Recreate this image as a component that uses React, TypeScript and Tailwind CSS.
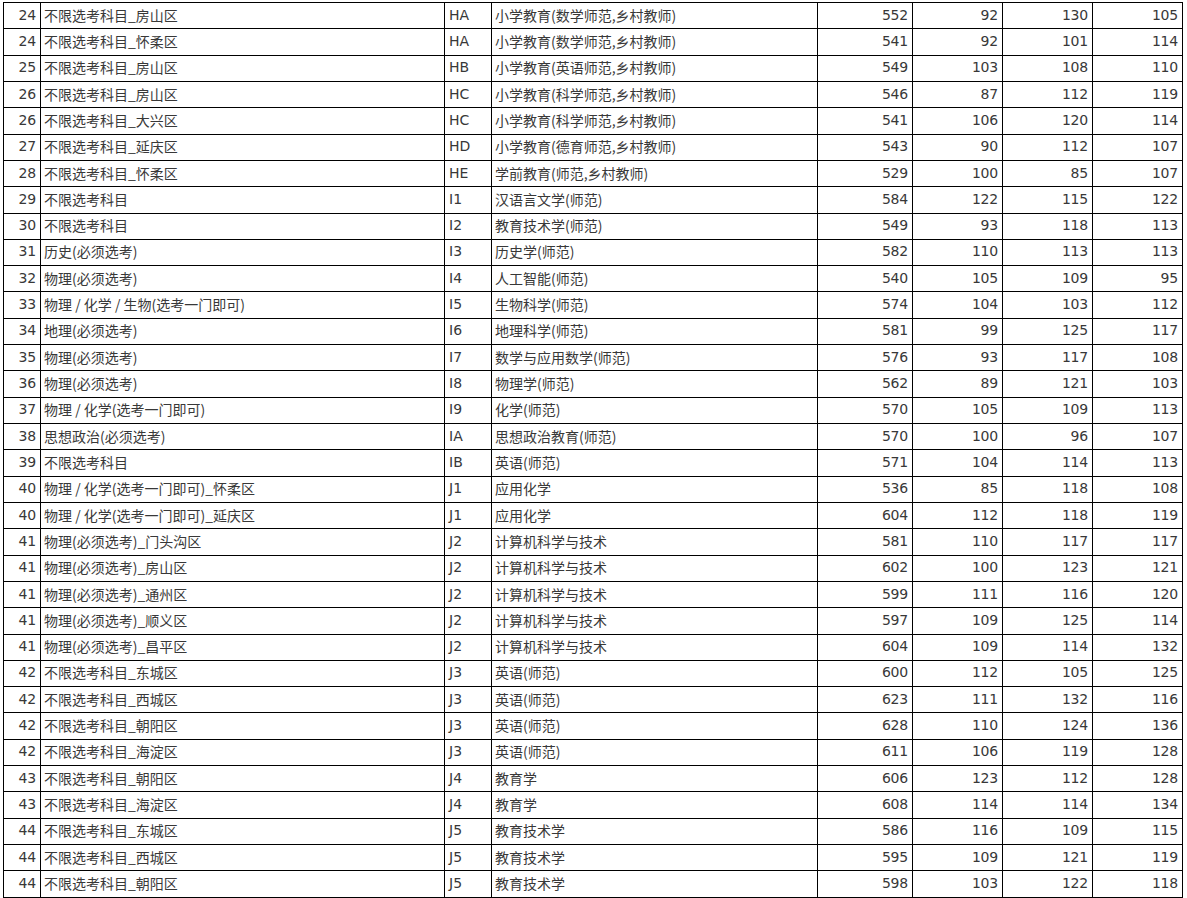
import React from "react";

type Row = [string, string, string, string, string, string, string, string];

const rows: Row[] = [
  ["24", "不限选考科目_房山区", "HA", "小学教育(数学师范,乡村教师)", "552", "92", "130", "105"],
  ["24", "不限选考科目_怀柔区", "HA", "小学教育(数学师范,乡村教师)", "541", "92", "101", "114"],
  ["25", "不限选考科目_房山区", "HB", "小学教育(英语师范,乡村教师)", "549", "103", "108", "110"],
  ["26", "不限选考科目_房山区", "HC", "小学教育(科学师范,乡村教师)", "546", "87", "112", "119"],
  ["26", "不限选考科目_大兴区", "HC", "小学教育(科学师范,乡村教师)", "541", "106", "120", "114"],
  ["27", "不限选考科目_延庆区", "HD", "小学教育(德育师范,乡村教师)", "543", "90", "112", "107"],
  ["28", "不限选考科目_怀柔区", "HE", "学前教育(师范,乡村教师)", "529", "100", "85", "107"],
  ["29", "不限选考科目", "I1", "汉语言文学(师范)", "584", "122", "115", "122"],
  ["30", "不限选考科目", "I2", "教育技术学(师范)", "549", "93", "118", "113"],
  ["31", "历史(必须选考)", "I3", "历史学(师范)", "582", "110", "113", "113"],
  ["32", "物理(必须选考)", "I4", "人工智能(师范)", "540", "105", "109", "95"],
  ["33", "物理 / 化学 / 生物(选考一门即可)", "I5", "生物科学(师范)", "574", "104", "103", "112"],
  ["34", "地理(必须选考)", "I6", "地理科学(师范)", "581", "99", "125", "117"],
  ["35", "物理(必须选考)", "I7", "数学与应用数学(师范)", "576", "93", "117", "108"],
  ["36", "物理(必须选考)", "I8", "物理学(师范)", "562", "89", "121", "103"],
  ["37", "物理 / 化学(选考一门即可)", "I9", "化学(师范)", "570", "105", "109", "113"],
  ["38", "思想政治(必须选考)", "IA", "思想政治教育(师范)", "570", "100", "96", "107"],
  ["39", "不限选考科目", "IB", "英语(师范)", "571", "104", "114", "113"],
  ["40", "物理 / 化学(选考一门即可)_怀柔区", "J1", "应用化学", "536", "85", "118", "108"],
  ["40", "物理 / 化学(选考一门即可)_延庆区", "J1", "应用化学", "604", "112", "118", "119"],
  ["41", "物理(必须选考)_门头沟区", "J2", "计算机科学与技术", "581", "110", "117", "117"],
  ["41", "物理(必须选考)_房山区", "J2", "计算机科学与技术", "602", "100", "123", "121"],
  ["41", "物理(必须选考)_通州区", "J2", "计算机科学与技术", "599", "111", "116", "120"],
  ["41", "物理(必须选考)_顺义区", "J2", "计算机科学与技术", "597", "109", "125", "114"],
  ["41", "物理(必须选考)_昌平区", "J2", "计算机科学与技术", "604", "109", "114", "132"],
  ["42", "不限选考科目_东城区", "J3", "英语(师范)", "600", "112", "105", "125"],
  ["42", "不限选考科目_西城区", "J3", "英语(师范)", "623", "111", "132", "116"],
  ["42", "不限选考科目_朝阳区", "J3", "英语(师范)", "628", "110", "124", "136"],
  ["42", "不限选考科目_海淀区", "J3", "英语(师范)", "611", "106", "119", "128"],
  ["43", "不限选考科目_朝阳区", "J4", "教育学", "606", "123", "112", "128"],
  ["43", "不限选考科目_海淀区", "J4", "教育学", "608", "114", "114", "134"],
  ["44", "不限选考科目_东城区", "J5", "教育技术学", "586", "116", "109", "115"],
  ["44", "不限选考科目_西城区", "J5", "教育技术学", "595", "109", "121", "119"],
  ["44", "不限选考科目_朝阳区", "J5", "教育技术学", "598", "103", "122", "118"],
];

const numCell =
  "flex items-center justify-end pr-[4px] pb-[2px] border-r border-b border-black font-['DejaVu_Sans','Noto_Sans_CJK_SC',sans-serif] tracking-[-0.2px]";
const txtCell =
  "flex items-center justify-start pl-[3px] pb-[2px] border-r border-b border-black whitespace-nowrap overflow-hidden font-['Noto_Sans_CJK_SC',sans-serif]";
const codeCell =
  "flex items-center justify-start pl-[4px] pb-[2px] border-r border-b border-black font-['DejaVu_Sans','Noto_Sans_CJK_SC',sans-serif]";

export default function App() {
  return (
    <div className="w-[1187px] h-[898px] bg-white overflow-hidden pt-[2px] pl-[3px]">
      <div className="grid grid-cols-[37px_404px_47px_326px_95px_90px_90px_90px] auto-rows-[26.32px] w-max border-l border-t border-black text-[14px] leading-none text-[#383838]">
        {rows.map((r, i) => (
          <React.Fragment key={i}>
            <div className={numCell}>{r[0]}</div>
            <div className={txtCell}>{r[1]}</div>
            <div className={codeCell}>{r[2]}</div>
            <div className={txtCell}>{r[3]}</div>
            <div className={numCell}>{r[4]}</div>
            <div className={numCell}>{r[5]}</div>
            <div className={numCell}>{r[6]}</div>
            <div className={numCell}>{r[7]}</div>
          </React.Fragment>
        ))}
      </div>
    </div>
  );
}
